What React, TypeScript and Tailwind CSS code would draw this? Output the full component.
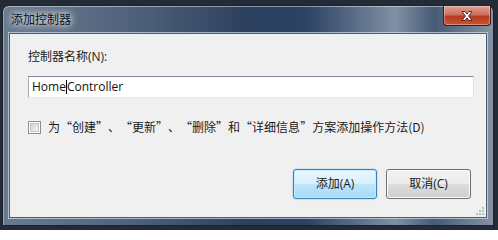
import React from 'react';

const cjk = "font-['Open_Sans','Noto_Sans_CJK_SC',sans-serif]";
const cjkFirst = "font-['Noto_Sans_CJK_SC','Open_Sans',sans-serif]";

function CloseButton() {
  return (
    <div className="absolute right-[2px] top-0 flex h-[20px] w-[48px] items-center justify-center rounded-b-[4px] border border-t-0 border-[#3a1a1a] bg-[linear-gradient(to_bottom,#e0a092_0%,#cf6d5c_45%,#b83a22_55%,#c8552f_100%)] shadow-[inset_0_0_0_1px_rgba(255,255,255,0.35)]">
      <svg width="14" height="12" viewBox="0 0 14 12">
        <path
          d="M2 1.5h3l2 2.6 2-2.6h3l-3.4 4.5 3.4 4.5h-3l-2-2.6-2 2.6h-3l3.4-4.5z"
          fill="#fff"
          stroke="#3b2020"
          strokeWidth="0.9"
          strokeLinejoin="round"
        />
      </svg>
    </div>
  );
}

function Checkbox() {
  return (
    <span className="flex h-[13px] w-[13px] shrink-0 items-center justify-center border border-[#8e8f8f] bg-white">
      <span className="h-[9px] w-[9px] border border-[#c4c4c4] bg-[linear-gradient(135deg,#cbcfd5,#f6f6f6)]" />
    </span>
  );
}

// full-width quote cells, as the CJK system font draws them
const Open = () => <span className="inline-block w-[12px] text-right">“</span>;
const Close = () => <span className="inline-block w-[12px] text-left">”</span>;

function DialogButton({ label, primary }: { label: string; primary?: boolean }) {
  return (
    <button
      className={
        primary
          ? `h-[30px] w-[84px] rounded-[3px] border border-[#3c7fb1] bg-[linear-gradient(to_bottom,#eaf6fd_0%,#d9f0fc_50%,#bee6fd_50%,#a7d9f5_100%)] text-[12px] leading-none text-[#1a1a1a] shadow-[inset_0_0_0_1px_#c4ebfe,0_0_2px_#7cc6f0] ${cjk}`
          : `h-[30px] w-[85px] rounded-[3px] border border-[#707070] bg-[linear-gradient(to_bottom,#f2f2f2_0%,#ebebeb_50%,#dddddd_50%,#cfcfcf_100%)] text-[12px] leading-none text-[#1a1a1a] shadow-[inset_0_0_0_1px_#fcfcfc] ${cjk}`
      }
    >
      {label}
    </button>
  );
}

export default function App() {
  return (
    <div className="h-[230px] w-[498px] overflow-hidden bg-[#222b36] pl-[2px] pt-[5px]">
      <div className="flex h-[221px] w-[492px] flex-col rounded-t-[7px] border border-[#1a222d] bg-[linear-gradient(to_right,#6a7b90_0%,#52647c_25%,#2c405f_50%,#2d4364_62%,#8090a4_80%,#475a75_88%,#8593a4_100%)] shadow-[inset_0_1px_0_rgba(255,255,255,0.45),inset_1px_0_0_rgba(255,255,255,0.3)]">
        {/* title bar */}
        <div className="relative flex h-[27px] shrink-0 items-center pl-[8px]">
          <span
            className={`text-[12px] leading-none text-[#111] [text-shadow:0_0_6px_#fff,0_0_10px_rgba(255,255,255,0.9)] ${cjk}`}
          >
            添加控制器
          </span>
          <CloseButton />
        </div>

        {/* client area */}
        <div className="mx-[6px] flex h-[185px] flex-col border border-[#4c5d72] bg-[#f0f0f0] pl-[18px] pr-[15px] pt-[15px] shadow-[0_0_0_1px_rgba(210,222,235,0.7)]">
          <label className={`h-[16px] text-[12px] leading-[16px] text-[#1a1a1a] ${cjk}`}>控制器名称(N):</label>

          <div className="mt-[11px] flex h-[22px] w-[446px] items-center border border-[#abadb3] border-t-[#7f8894] border-b-[#e3e9ef] border-r-[#dbdfe6] bg-white pl-[3px]">
            <span className={`text-[12px] leading-none text-[#111] ${cjk}`}>Home</span>
            <span className="h-[14px] w-px bg-black" />
            <span className={`text-[12px] leading-none text-[#111] ${cjk}`}>Controller</span>
          </div>

          <div className="mt-[22px] flex items-center gap-[7px]">
            <Checkbox />
            <span className={`text-[12px] leading-[14px] text-[#1a1a1a] ${cjkFirst}`}>
              为<Open />创建<Close />、<Open />更新<Close />、<Open />删除<Close />和<Open />详细信息<Close />方案添加操作方法(D)
            </span>
          </div>

          <div className="mt-[35px] flex justify-end gap-[9px]">
            <DialogButton label="添加(A)" primary />
            <DialogButton label="取消(C)" />
          </div>

          <div className="mt-auto mb-[2px] flex justify-end">
            <div className="mr-[-13px] grid grid-cols-3 gap-px">
              <span />
              <span />
              <span className="h-[2px] w-[2px] bg-[#b5bcc6]" />
              <span />
              <span className="h-[2px] w-[2px] bg-[#b5bcc6]" />
              <span className="h-[2px] w-[2px] bg-[#b5bcc6]" />
              <span className="h-[2px] w-[2px] bg-[#b5bcc6]" />
              <span className="h-[2px] w-[2px] bg-[#b5bcc6]" />
              <span className="h-[2px] w-[2px] bg-[#b5bcc6]" />
            </div>
          </div>
        </div>
      </div>
    </div>
  );
}
